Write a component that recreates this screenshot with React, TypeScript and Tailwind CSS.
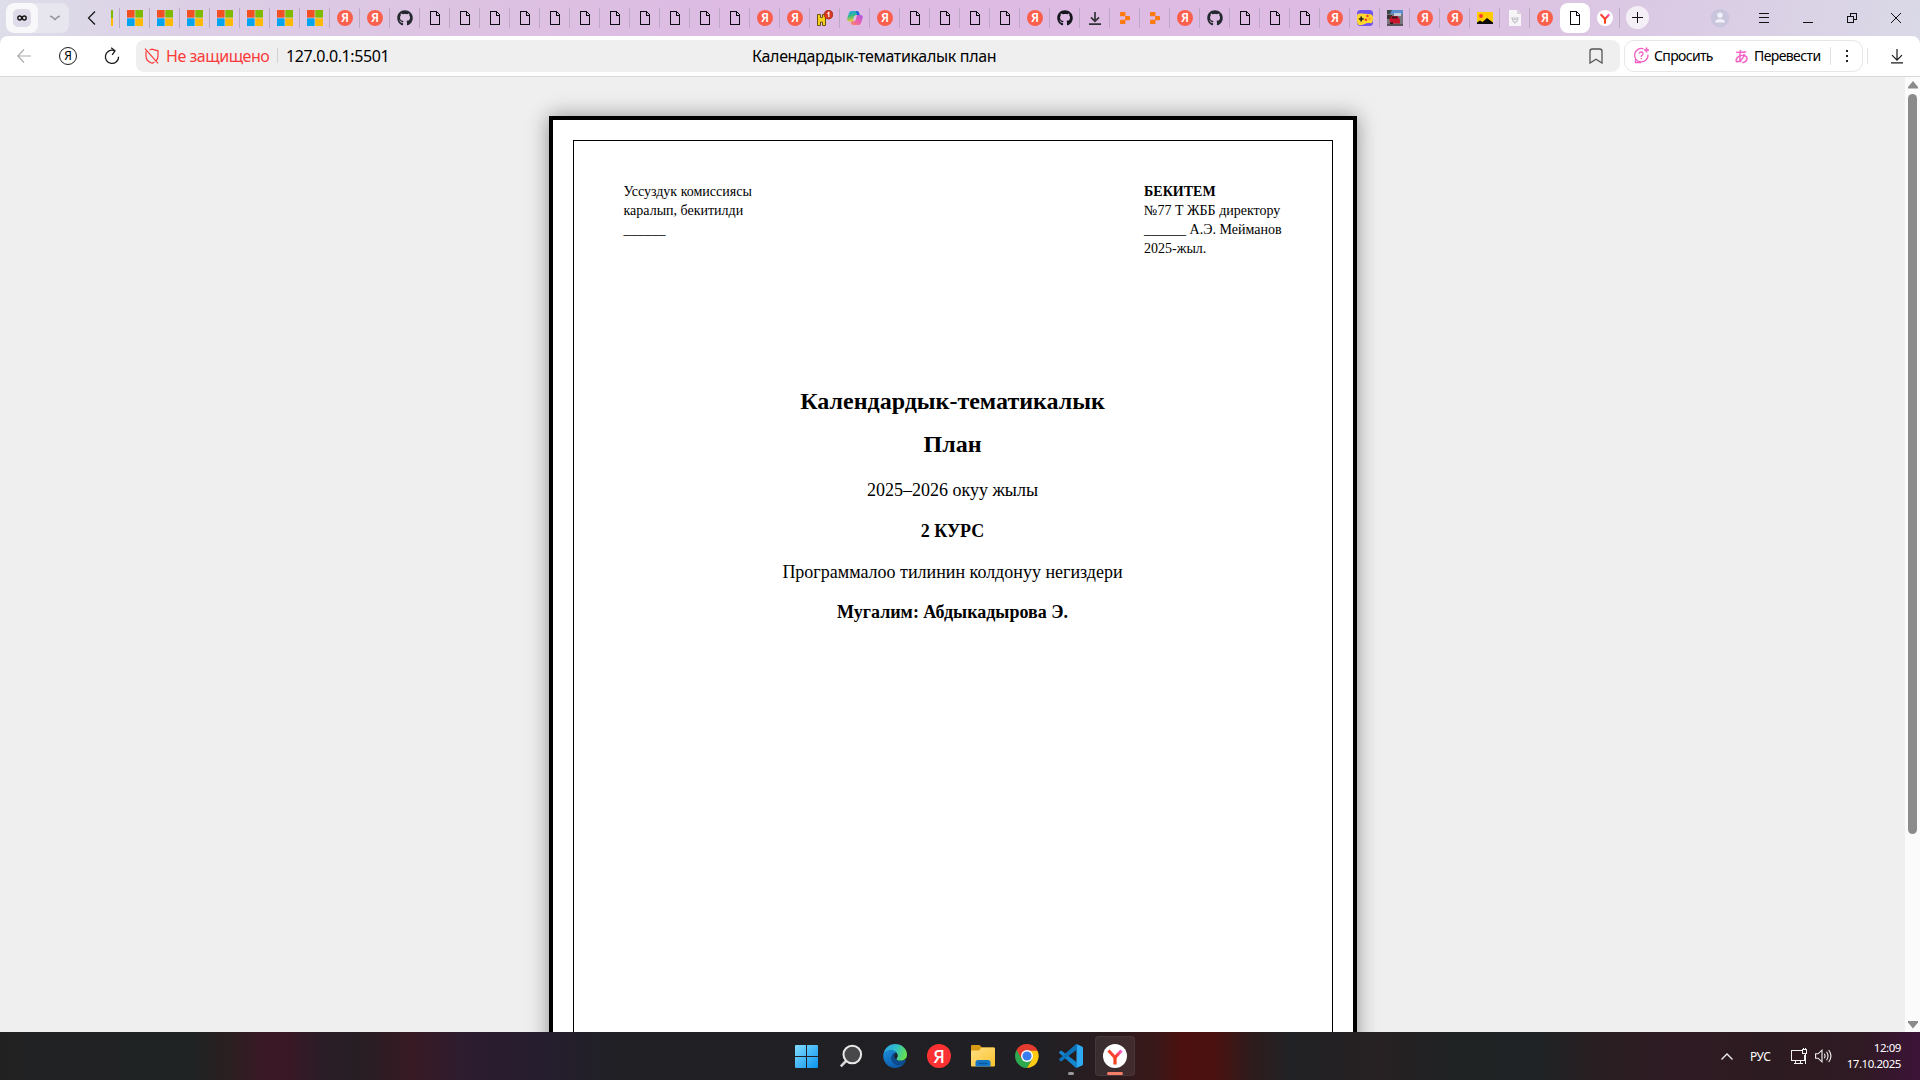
import React from "react";
import { FaGithub } from "react-icons/fa";

type TabKind =
  | "ms" | "ya" | "gh" | "ghDark" | "doc" | "hab" | "copilot" | "down"
  | "orange" | "game" | "car" | "pic" | "grey";

const rep = (kind: TabKind, n: number): TabKind[] => Array(n).fill(kind);

const tabs: TabKind[] = [
  ...rep("ms", 7), "ya", "ya", "gh", ...rep("doc", 11), "ya", "ya", "hab", "copilot", "ya",
  ...rep("doc", 4), "ya", "ghDark", "down", "orange", "orange", "ya", "gh", ...rep("doc", 3),
  "ya", "game", "car", "ya", "ya", "pic", "grey", "ya",
];

function Doc() {
  return (
    <svg width="16" height="16" viewBox="0 0 16 16" fill="none" stroke="#0b0b12" strokeWidth="1.1" shapeRendering="crispEdges">
      <path d="M3.5 1.5H9.5L12.5 4.5V14.5H3.5Z" />
      <path d="M9.5 1.5V5.5H12.5" />
    </svg>
  );
}

function Microsoft() {
  return (
    <svg width="16" height="16" viewBox="0 0 16 16">
      <rect width="7.6" height="7.6" fill="#f25022" />
      <rect x="8.3" width="7.7" height="7.6" fill="#7fba00" />
      <rect y="8.3" width="7.6" height="7.7" fill="#00a4ef" />
      <rect x="8.3" y="8.3" width="7.7" height="7.7" fill="#ffb900" />
    </svg>
  );
}

function YaBadge() {
  return (
    <span className="flex size-4 items-center justify-center rounded-full bg-[#fc5f4b] text-[12px] leading-4 font-semibold text-white font-['Noto_Sans',sans-serif]">
      Я
    </span>
  );
}

function TabIcon({ kind }: { kind: TabKind }) {
  switch (kind) {
    case "ms":
      return <Microsoft />;
    case "ya":
      return <YaBadge />;
    case "gh":
      return <FaGithub size={16} color="#24292f" />;
    case "ghDark":
      return <FaGithub size={16} color="#15171c" />;
    case "doc":
      return <Doc />;
    case "hab":
      return (
        <svg width="16" height="16" viewBox="0 0 16 16">
          <path d="M.5 4.500h3v3h2v-3h3v11h-3v-3.500h-2v3.500h-3z" fill="#f5cf1c" stroke="#6b5312" strokeWidth="1" />
          <circle cx="11.500" cy="4.600" r="4.400" fill="#d93a22" stroke="#8a1c0e" strokeWidth=".7" />
          <path d="M10.400 3.600l1.400-1.200v4.600" fill="none" stroke="#fff" strokeWidth="1.100" />
        </svg>
      );
    case "copilot":
      return (
        <svg width="16" height="16" viewBox="0 0 16 16">
          <defs>
            <linearGradient id="cpA" x1="0" y1="0" x2=".3" y2="1">
              <stop offset="0" stopColor="#1aa5f0" />
              <stop offset=".5" stopColor="#37b78c" />
              <stop offset="1" stopColor="#f2cf2c" />
            </linearGradient>
            <linearGradient id="cpB" x1="1" y1="0" x2="0" y2="1">
              <stop offset="0" stopColor="#a45bea" />
              <stop offset=".5" stopColor="#ea5eb0" />
              <stop offset="1" stopColor="#ff8a55" />
            </linearGradient>
          </defs>
          <path d="M4.600 1h5c1.500 0 2 1 2.400 2.300l.5 1.700H9.600c-1.500 0-2 .8-2.400 2L6 11.500H2.400C.6 11.500-.2 10 .3 8L2 3C2.500 1.700 3.300 1 4.600 1z" fill="url(#cpA)" />
          <path d="M9 1h1c1.300 0 2 1 2.300 2.300l.5 1.700H10z" fill="#1c5fe0" />
          <path d="M11.400 15h-5C5 15 4.400 14 4 12.700L3.600 11.500h2.800c1.500 0 2-.8 2.400-2L10 5h3.600c1.800 0 2.600 1.200 2.100 3L14 13c-.5 1.300-1.300 2-2.600 2z" fill="url(#cpB)" />
          <path d="M7.400 6h1.800l-1 4H6.400z" fill="#dfbfe5" />
        </svg>
      );
    case "down":
      return (
        <svg width="16" height="16" viewBox="0 0 16 16" fill="none" stroke="#32323a" strokeWidth="1.700">
          <path d="M8 2v9M4 7.300l4 4 4-4M2 14.200h12" />
        </svg>
      );
    case "orange":
      return (
        <svg width="16" height="16" viewBox="0 0 16 16" fill="#ff7a0f">
          <rect x="3" y="2" width="5.500" height="4.300" rx=".8" />
          <rect x="8" y="6" width="5" height="4.200" rx=".8" />
          <rect x="3" y="9.800" width="5.500" height="4.300" rx=".8" />
        </svg>
      );
    case "game":
      return (
        <svg width="16" height="16" viewBox="0 0 16 16">
          <rect width="16" height="16" rx="3.500" fill="#6f55ee" />
          <path d="M0 6C0 3.500 2 3.200 5 3.600L13 4.300c2 .2 3 1.500 3 3.700 0 3-.5 5.500-2.500 5.200C11 12.600 9 13 6.500 14.500 3 16 0 15.500 0 11z" fill="#ffd62e" />
          <path d="M4.200 6.500v5M1.800 9h5" stroke="#222" strokeWidth="1.600" />
          <circle cx="10.500" cy="6" r="1.200" fill="#ef3c2e" />
          <circle cx="9" cy="9.800" r="1.200" fill="#ef3c2e" />
          <circle cx="12.500" cy="8.800" r="1" fill="#ff8a1c" />
        </svg>
      );
    case "car":
      return (
        <svg width="16" height="16" viewBox="0 0 16 16">
          <rect width="16" height="16" fill="#77797f" />
          <rect width="16" height="4" fill="#5c8fd0" />
          <path d="M0 0h5l-2 4H0z" fill="#3c4a4c" />
          <path d="M7 3h7v3H7z" fill="#c3ccd8" />
          <path d="M0 5h5v4H0z" fill="#3a3032" />
          <path d="M2.500 9l2-3h6L13 9.500v4H3z" fill="#c9142c" />
          <path d="M5 6.500h5l1 2H4.500z" fill="#3b1724" />
          <path d="M0 14h16v2H0z" fill="#55545a" />
          <path d="M3 12.500h3v1.500H3z" fill="#241a20" />
        </svg>
      );
    case "pic":
      return (
        <svg width="16" height="12" viewBox="0 0 16 12">
          <rect width="16" height="12" fill="#ffcc00" />
          <circle cx="4" cy="4" r="1.900" fill="#f33" />
          <path d="M0 12V10.500l3-2 2.500 1.500L10 6l6 4.500V12z" fill="#0a0a0a" />
        </svg>
      );
    case "grey":
      return (
        <svg width="16" height="16" viewBox="0 0 16 16">
          <path d="M2 0h8l4 4v12H2z" fill="#f6f4f7" />
          <path d="M10 0l4 4h-4z" fill="#d5d2d8" />
          <path d="M5 8h6l-1 3-2 2-2-2z" fill="none" stroke="#c2c0c6" strokeWidth="1.200" />
          <path d="M6.500 9.500h3" stroke="#c2c0c6" />
        </svg>
      );
  }
}

function YBrowser({ size, id }: { size: number; id: string }) {
  return (
    <svg width={size} height={size} viewBox="0 0 24 24">
      <defs>
        <linearGradient id={id} gradientUnits="userSpaceOnUse" x1="10" y1="15" x2="19" y2="6">
          <stop offset="0" stopColor="#fb4422" />
          <stop offset=".45" stopColor="#fb4040" />
          <stop offset="1" stopColor="#ff5ce8" />
        </linearGradient>
      </defs>
      <circle cx="12" cy="12" r="12" fill="#fff" />
      <path d="M5.500 6.500L12 13.500L18.500 6.500" fill="none" stroke={`url(#${id})`} strokeWidth="3.200" />
      <path d="M12 12.800V20.500" stroke="#f5421e" strokeWidth="3.200" />
    </svg>
  );
}

function TabStrip() {
  return (
    <div className="flex h-9 bg-[linear-gradient(100deg,#dddeea_0%,#dccfe5_10%,#ddc2e2_25%,#ddbbe3_38%,#ddbbe3_68%,#dcc4e3_80%,#dad0e5_92%,#dad9e7_100%)]">
      <div className="mt-[3px] ml-1.5 flex h-[30px] w-[63px] overflow-hidden rounded-[8px] bg-[#e7e5ed]">
        <div className="flex w-8 items-center justify-center rounded-[8px] bg-[#f8f7fa]">
          <div className="flex size-[18px] items-center justify-center rounded-[5px] bg-[#dfdbe8]">
            <svg width="10" height="6" viewBox="0 0 10 6" fill="none" stroke="#111" strokeWidth="1.400">
              <ellipse cx="2.700" cy="3" rx="1.900" ry="2" />
              <ellipse cx="7.300" cy="3" rx="1.900" ry="2" />
            </svg>
          </div>
        </div>
        <div className="flex flex-1 items-center justify-center pl-0.5">
          <svg width="12" height="6" viewBox="0 0 12 6" fill="none" stroke="#96949c" strokeWidth="1.500">
            <path d="M1 1q3 1 5 3.600Q8 2 11 1" />
          </svg>
        </div>
      </div>
      <div className="ml-[18px] flex w-6 items-center">
        <svg width="9" height="14" viewBox="0 0 9 14" fill="none" stroke="#111" strokeWidth="1.200">
          <path d="M8 .5L1.500 7L8 13.500" />
        </svg>
      </div>
      <div className="flex w-2 items-center">
        <div className="h-4 w-0.5 bg-[linear-gradient(#7fba00_48%,#c9c890_48%,#ffb900_54%)]" />
      </div>
      <div className="flex">
        {tabs.map((kind, i) => (
          <div key={i} className="flex w-[30px] items-center">
            <div className="h-5 w-px bg-[#bba9c6]" />
            <div className="flex flex-1 items-center justify-center pr-px pl-0.5">
              <TabIcon kind={kind} />
            </div>
          </div>
        ))}
      </div>
      <div className="mt-[3px] ml-px flex h-[30px] w-[30px] items-center justify-center rounded-[8px] bg-white">
        <Doc />
      </div>
      <div className="flex w-[29px] items-center justify-center">
        <YBrowser size={16} id="ytab" />
      </div>
      <div className="my-2 w-px bg-[#bba9c6]" />
      <div className="mt-1.5 ml-1.5 flex size-[23px] items-center justify-center rounded-full bg-[#f4eff7]">
        <svg width="11" height="11" viewBox="0 0 11 11" stroke="#111" strokeWidth="1"><path d="M5.500 0v11M0 5.500h11" /></svg>
      </div>
      <div className="ml-auto flex items-center">
        <svg width="20" height="20" viewBox="0 0 20 20">
          <circle cx="10" cy="10" r="9.300" fill="#c9c5dc" />
          <circle cx="10" cy="7.300" r="2.700" fill="#f1eff8" />
          <path d="M5 14.500q0-3.500 5-3.500t5 3.500z" fill="#f1eff8" />
        </svg>
        <svg className="ml-[29px]" width="10" height="10" viewBox="0 0 10 10" stroke="#111" strokeWidth="1" shapeRendering="crispEdges">
          <path d="M0 .5h10M0 4.500h10M0 9.500h10" />
        </svg>
        <div className="mt-2 ml-[34px] h-px w-2.5 bg-[#111]" />
        <svg className="ml-[34px]" width="10" height="10" viewBox="0 0 10 10" fill="none" stroke="#111" strokeWidth="1" shapeRendering="crispEdges">
          <path d="M.5 3.500h6v6h-6zM3.500 3.500v-3h6v6h-3" />
        </svg>
        <svg className="mr-[19px] ml-[34px]" width="10" height="10" viewBox="0 0 10 10" stroke="#111" strokeWidth="1">
          <path d="M0 0l10 10M10 0L0 10" />
        </svg>
      </div>
    </div>
  );
}

function Toolbar() {
  return (
    <div className="bg-[linear-gradient(90deg,#dddcea,#dad9e7)]">
      <div className="flex h-[41px] items-center rounded-t-[8px] border-b border-[#d6d9d8] bg-white pb-px text-black">
        <svg className="ml-[17px]" width="14" height="14" viewBox="0 0 14 14" fill="none" stroke="#a9a9a9" strokeWidth="1.100">
          <path d="M14 7H1M7 .5L.7 7L7 13.500" />
        </svg>
        <div className="ml-7 flex size-[18px] items-center justify-center rounded-full border border-[#1a1a1a] text-[12px] leading-none">Я</div>
        <svg className="ml-[27px]" width="16" height="18" viewBox="0 0 16 18" fill="none" stroke="#1a1a1a" strokeWidth="1.300">
          <path d="M10.500 3.700A6.600 6.600 0 1 0 14.600 9.700" />
          <path d="M7.200.8L11 3.800L8.200 7.800" />
        </svg>
        <div className="ml-4 flex h-8 w-[1484px] items-center rounded-[8px] bg-[#efefef] text-[16px]">
          <svg className="ml-2" width="16" height="16" viewBox="0 0 16 16" fill="none" stroke="#fb3b3b" strokeWidth="1.200">
            <path d="M5.500 2L8 1.200L14 2.800V8C14 9.800 13.400 11.400 12.300 12.600M10.500 14L8 15.300C4.500 14 2 11.500 2 8V3.200M1 .7L14 15.300" />
          </svg>
          <span className="ml-[6px] w-[102px] whitespace-nowrap tracking-[-0.45px] text-[#fb3b3b]">Не защищено</span>
          <div className="ml-[9px] h-[15px] w-px bg-[#d2d2d2]" />
          <span className="ml-2 w-[110px] tracking-[-0.38px] whitespace-nowrap">127.0.0.1:5501</span>
          <span className="ml-[356px] w-[260px] whitespace-nowrap tracking-[-0.33px]">Календардык-тематикалык план</span>
          <svg className="mr-[17px] ml-auto" width="14" height="16" viewBox="0 0 14 16" fill="none" stroke="#555" strokeWidth="1.300">
            <path d="M1 3.200Q1 1 3.200 1H10.800Q13 1 13 3.200V15L7 11.300L1 15Z" />
          </svg>
        </div>
        <div className="ml-1 flex h-8 w-[239px] items-center rounded-[10px] border border-[#e6e6e6] text-[14px]">
          <svg className="ml-2" width="17" height="17" viewBox="0 0 17 17" fill="none" stroke="#f25fc4" strokeWidth="1.300">
            <path d="M10.500 1.800A6.700 6.700 0 1 0 15 7.500M2.500 12v3.500H8" />
            <path d="M6.300 6.800Q6.500 5 8.300 5T10 6.800Q10 8 8.300 9v.9M8.300 11v1.300" />
            <path d="M13.500.5v5M11 3h5" strokeWidth="1.700" />
          </svg>
          <span className="mb-px ml-[4px] w-[59px] whitespace-nowrap tracking-[-0.65px]">Спросить</span>
          <span className="ml-[21px] w-[15px] text-[15px] leading-none font-medium text-[#f25fc4] font-['Noto_Sans_CJK_JP',sans-serif]">あ</span>
          <span className="mb-px ml-[5px] w-[66px] whitespace-nowrap tracking-[-0.6px]">Перевести</span>
          <div className="ml-[10px] h-[18px] w-px bg-[#e3e3e3]" />
          <div className="ml-[15px] flex flex-col gap-[3px]">
            <i className="size-0.5 bg-[#222]" />
            <i className="size-0.5 bg-[#222]" />
            <i className="size-0.5 bg-[#222]" />
          </div>
        </div>
        <div className="ml-1 h-4 w-px bg-[#e3e3e3]" />
        <svg className="ml-[22px]" width="14" height="16" viewBox="0 0 14 16" fill="none" stroke="#1a1a1a" strokeWidth="1.200">
          <path d="M7 1v11M2 7.200l5 5 5-5M1 14.900h12" />
        </svg>
      </div>
    </div>
  );
}

function Sheet() {
  return (
    <div className="mx-auto mt-[39px] h-[1131px] w-[808px] shrink-0 border-4 border-black bg-white p-5 text-black shadow-[0_0_20px_rgba(0,0,0,0.4)] font-['Liberation_Serif',serif]">
      <div className="h-full border border-black px-[50px] pt-[41px]">
        <div className="flex justify-between text-[14px] leading-[19px]">
          <div>
            Уссуздук комиссиясы
            <br />
            каралып, бекитилди
            <br />
            ______
          </div>
          <div>
            <b>БЕКИТЕМ</b>
            <br />
            №77 Т ЖББ директору
            <br />
            ______ А.Э. Мейманов
            <br />
            2025-жыл.
          </div>
        </div>
        <div className="mt-[122px] text-center">
          <h1 className="text-[24px] leading-[43px] font-bold">
            Календардык-тематикалык
            <br />
            План
          </h1>
          <p className="mt-[10px] text-[18px] leading-[28.8px]">2025–2026 окуу жылы</p>
          <p className="mt-3 text-[18px] leading-[28.8px] font-bold">2 КУРС</p>
          <p className="mt-3 text-[18px] leading-[28.8px]">Программалоо тилинин колдонуу негиздери</p>
          <p className="mt-3 text-[18px] leading-[28.8px] font-bold">Мугалим: Абдыкадырова Э.</p>
        </div>
      </div>
    </div>
  );
}

function Scrollbar() {
  return (
    <div className="flex w-[15px] flex-col items-center bg-[#fbfbfb]">
      <svg className="mt-1" width="10" height="8" viewBox="0 0 10 8" fill="#8b8b8b"><path d="M5 0L10 6V7.500H0V6z" /></svg>
      <div className="mt-[5px] h-[740px] w-[9px] rounded-full bg-[#8b8b8b]" />
      <svg className="mt-auto mb-[3px]" width="10" height="8" viewBox="0 0 10 8" fill="#8b8b8b"><path d="M5 7.500L10 1.500V0H0V1.500z" /></svg>
    </div>
  );
}

function TaskIcon({ children }: { children: React.ReactNode }) {
  return <div className="flex w-11 items-center justify-center">{children}</div>;
}

function Taskbar() {
  return (
    <div className="flex h-12 bg-[linear-gradient(90deg,#212122_0px,#1f2324_190px,#2b1f21_230px,#3b1826_265px,#3a1826_290px,#2b1d28_320px,#261e23_360px,#391a24_410px,#2d1c30_465px,#251d2e_540px,#202025_620px,#202024_1040px,#2c1b1e_1115px,#3a1819_1155px,#4c1110_1180px,#4a1110_1215px,#2e1b1b_1250px,#212225_1290px,#272123_1380px,#1f2324_1460px,#1f2224_1540px,#2a1f22_1600px,#2f1b24_1680px,#2c1b20_1770px,#2f1a23_1860px,#3c1438_1920px)] text-white">
      <div className="flex w-[785px]" />
      <TaskIcon>
        <svg className="mr-0.5" width="23" height="23" viewBox="0 0 23 23">
          <defs>
            <linearGradient id="win" x1="0" y1="0" x2="1" y2="1">
              <stop offset="0" stopColor="#82dcff" />
              <stop offset="1" stopColor="#0a93ef" />
            </linearGradient>
          </defs>
          <path d="M0 1Q0 0 1 0H11V11H0zM12 0H22Q23 0 23 1V11H12zM0 12H11V23H1Q0 23 0 22zM12 12H23V22Q23 23 22 23H12z" fill="url(#win)" />
        </svg>
      </TaskIcon>
      <TaskIcon>
        <svg width="24" height="24" viewBox="0 0 24 24" fill="none">
          <path d="M8 16L1.800 22.300" stroke="#d6d6d6" strokeWidth="2.600" />
          <circle cx="13.300" cy="10.500" r="8.800" fill="#48474a" stroke="#e9e9e9" strokeWidth="2" />
        </svg>
      </TaskIcon>
      <TaskIcon>
        <svg width="24" height="24" viewBox="0 0 24 24">
          <defs>
            <linearGradient id="edgeA" x1="0" y1=".2" x2="1" y2=".5">
              <stop offset="0" stopColor="#2a9fe6" />
              <stop offset=".5" stopColor="#2fbfc9" />
              <stop offset="1" stopColor="#66e04e" />
            </linearGradient>
            <linearGradient id="edgeB" x1="0" y1="0" x2=".6" y2="1">
              <stop offset="0" stopColor="#1b8ddc" />
              <stop offset="1" stopColor="#0c59a8" />
            </linearGradient>
          </defs>
          <path d="M.4 11C1 4.500 6 0 12 0c7 0 12 5 12 10.500 0 4-3 6.300-6.500 6.300-2.800 0-4.200-1-4.200-1.900 0-.8 1.200-1.100 1.200-3.200C14.500 9 12 6.600 8 6.600 4 6.600 1.300 8.800.4 11z" fill="url(#edgeA)" />
          <path d="M.3 10.500C1.300 8 4 6.200 8 6.200c2.500 0 4.500.8 5.600 2.200-3 0-5.100 2.600-5.100 5.600 0 4 3.500 7 7.500 6.800 2.500 0 4.600-1.100 6.200-2.500C20.200 21.800 16.500 24 12 24 5 24-.6 17.500.3 10.500z" fill="url(#edgeB)" />
          <path d="M8.500 14c0-3 1.800-5.300 4.600-5.600.9.900 1.400 2 1.400 3.300 0 2.100-1.200 2.400-1.200 3.200 0 .9 1.400 1.900 4.200 1.900 2 0 3.600-.6 4.700-1.600.8.500.6 2 .3 2.600-1.500 1.900-4 3-6.500 3-4 .2-7.500-2.800-7.500-6.800z" fill="#0d4c91" />
          <path d="M13.300 14.900c0-.8 1.200-1.100 1.200-3.200 0-1-.4-2-1.100-2.800-1.800.7-2.200 2.300-2 3.800.2 1.500 1 2.200 1.900 2.200z" fill="#202024" />
        </svg>
      </TaskIcon>
      <TaskIcon>
        <span className="flex size-6 items-center justify-center rounded-full bg-[#fc3232] text-[18px] leading-6 font-medium text-white">Я</span>
      </TaskIcon>
      <TaskIcon>
        <svg width="24" height="22" viewBox="0 0 24 22">
          <defs>
            <linearGradient id="fold" x1="0" y1="0" x2="1" y2="1">
              <stop offset="0" stopColor="#ffe083" />
              <stop offset="1" stopColor="#fbc22f" />
            </linearGradient>
          </defs>
          <path d="M0 1Q0 0 1 0H8.500L11 2.500H23V8H0z" fill="#d89b14" />
          <path d="M0 5.500H8L10.500 2.500H23Q24 2.500 24 3.500V20.500Q24 21.500 23 21.500H1Q0 21.500 0 20.500z" fill="url(#fold)" />
          <path d="M4.500 21.500V17.500Q4.500 15 7 15H17Q19.500 15 19.500 17.500V21.500z" fill="#1477c8" />
          <path d="M8 18.500h8" stroke="#0b57a0" strokeWidth="1.400" strokeLinecap="round" />
        </svg>
      </TaskIcon>
      <TaskIcon>
        <svg width="24" height="24" viewBox="0 0 24 24">
          <path d="M12 12L1.610 6A12 12 0 0 1 22.390 6z" fill="#e33b2e" />
          <path d="M1.610 6L6.800 15L12 12zM1.610 6A12 12 0 0 0 12 24L17.200 15L12 12L6.800 15z" fill="#2da94f" />
          <path d="M22.390 6.500A12 12 0 0 1 12 24L17.200 15L12 6.500z" fill="#fdc912" />
          <path d="M1.610 6A12 12 0 0 1 22.390 6.500H12L6.800 15z" fill="#e33b2e" />
          <circle cx="12" cy="12" r="6" fill="#fff" />
          <circle cx="12" cy="12" r="4.600" fill="#3a7cf0" />
        </svg>
      </TaskIcon>
      <div className="relative flex w-11 items-center justify-center">
        <svg width="24" height="24" viewBox="0 0 24 24">
          <path d="M17.500 0L23 2.400Q24 2.900 24 4V20Q24 21 23 21.500L17.500 24z" fill="#2fa8f2" />
          <path d="M0 8.200L1.600 6.800Q2.200 6.400 2.900 6.900L18 18.500V24Q17 24 16.200 23.200L.2 8.900Q-.1 8.500 0 8.200z" fill="#1486cf" />
          <path d="M0 15.800L1.600 17.200Q2.200 17.600 2.900 17.100L18 5.500V0Q17 0 16.200 .8L.2 15.100Q-.1 15.500 0 15.800z" fill="#0d73b8" />
        </svg>
        <div className="absolute bottom-[5px] h-[3px] w-1.5 rounded-full bg-[#9a9a9c]" />
      </div>
      <div className="relative my-1 ml-0.5 flex w-10 items-center justify-center rounded-[4px] border border-white/5 bg-white/8">
        <YBrowser size={24} id="ytask" />
        <div className="absolute bottom-0 h-[3px] w-4 rounded-full bg-[#f5806a]" />
      </div>
      <div className="ml-auto flex items-center text-[12px]">
        <svg width="12" height="7" viewBox="0 0 12 7" fill="none" stroke="#f2f2f2" strokeWidth="1.300"><path d="M.5 6.500L6 1l5.500 5.500" /></svg>
        <span className="mt-0.5 ml-[17px] w-[22px] text-[12px] whitespace-nowrap tracking-[-0.4px]">РУС</span>
        <svg className="ml-[19px]" width="17" height="17" viewBox="0 0 17 17" fill="none" stroke="#f2f2f2" strokeWidth="1" shapeRendering="crispEdges">
          <path d="M11 2.500H.5V12.500H13.500V6.500M4.500 12.500V15.500M9.500 12.500V15.500M3 15.500H12" />
          <path d="M11.500 1.500h4v4h-4zM12.500 0v2M14.500 0v2M14.500 5.500v10" />
        </svg>
        <svg className="ml-[7px]" width="17" height="16" viewBox="0 0 17 16" fill="none" stroke="#f2f2f2" strokeWidth="1.100">
          <path d="M.6 5.800H3L7 2.200V13.800L3 10.200H.6z" />
          <path d="M9.300 5.700q1.500 2.300 0 4.600M11.500 3.800q3 4.200 0 8.400M13.700 2q4.500 6 0 12" />
        </svg>
        <div className="mr-[19px] ml-3 w-[57px] text-right text-[11.5px] leading-4 whitespace-nowrap tracking-[-0.45px]">
          12:09
          <br />
          17.10.2025
        </div>
      </div>
    </div>
  );
}

export default function App() {
  return (
    <div className="flex h-[1080px] w-[1920px] flex-col overflow-hidden font-['Noto_Sans',sans-serif]">
      <TabStrip />
      <Toolbar />
      <div className="flex h-[955px] overflow-hidden bg-[#efefef]">
        <div className="flex h-full flex-1 flex-col overflow-hidden">
          <Sheet />
        </div>
        <Scrollbar />
      </div>
      <Taskbar />
    </div>
  );
}
